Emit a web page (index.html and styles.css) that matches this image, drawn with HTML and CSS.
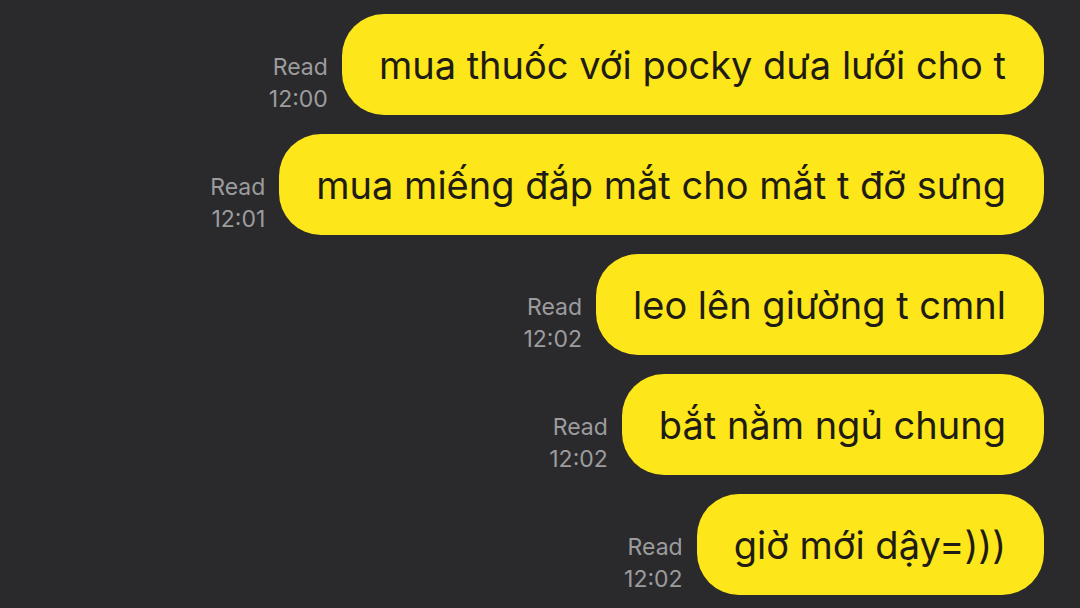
FILE: index.html
```html
<!DOCTYPE html>
<html lang="vi">
<head>
<meta charset="utf-8">
<link rel="stylesheet" href="styles.css">
</head>
<body>
<main class="chat">
  <div class="row">
    <div class="meta"><span class="read">Read</span><span class="time">12:00</span></div>
    <div class="bubble">mua thuốc với pocky dưa lưới cho t</div>
  </div>
  <div class="row">
    <div class="meta"><span class="read">Read</span><span class="time">12:01</span></div>
    <div class="bubble">mua miếng đắp mắt cho mắt t đỡ sưng</div>
  </div>
  <div class="row">
    <div class="meta"><span class="read">Read</span><span class="time">12:02</span></div>
    <div class="bubble">leo lên giường t cmnl</div>
  </div>
  <div class="row">
    <div class="meta"><span class="read">Read</span><span class="time">12:02</span></div>
    <div class="bubble">bắt nằm ngủ chung</div>
  </div>
  <div class="row">
    <div class="meta"><span class="read">Read</span><span class="time">12:02</span></div>
    <div class="bubble">giờ mới dậy=)))</div>
  </div>
</main>
</body>
</html>
```
FILE: styles.css
```css
* { box-sizing: border-box; }
html, body {
  margin: 0;
  padding: 0;
  width: 1080px;
  height: 608px;
  overflow: hidden;
  background: #2a2a2c;
  font-family: Inter, "Noto Sans", sans-serif;
}
.chat {
  display: flex;
  flex-direction: column;
  align-items: flex-end;
  gap: 19px;
  padding: 14px 36px 0 0;
}
.row {
  display: flex;
  align-items: flex-end;
  gap: 14px;
}
.meta {
  display: flex;
  flex-direction: column;
  align-items: flex-end;
  color: #9c9c9e;
  font-size: 23px;
  line-height: 32px;
  padding-bottom: 0;
}
.bubble {
  height: 101px;
  display: flex;
  align-items: center;
  padding: 0 38px 0 37px;
  background: #fde619;
  color: #1e1c14;
  border-radius: 42px;
  font-size: 38px;
  white-space: nowrap;
}
```
